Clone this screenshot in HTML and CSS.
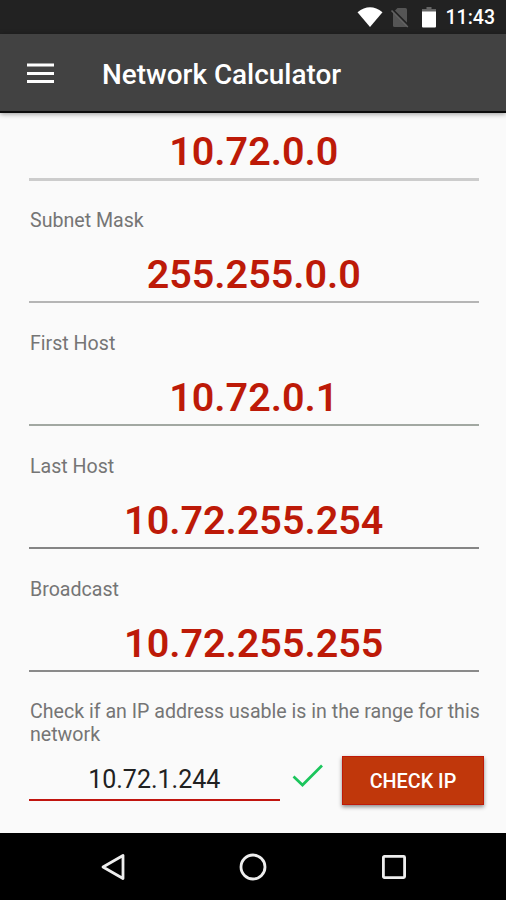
FILE: index.html
```html
<!DOCTYPE html>
<html lang="en">
<head>
<meta charset="utf-8">
<title>Network Calculator</title>
<link rel="stylesheet" href="styles.css">
</head>
<body>
<div class="status">
  <svg class="wifi" width="26" height="22" viewBox="0 0 26 22"><path d="M13 21 .5 6.2Q13-3.600 25.500 6.200Z" fill="#fff"/></svg>
  <svg class="sim" width="20" height="22" viewBox="0 0 20 22"><path d="M7.500 1H15.500Q17 1 17 2.500V18.500Q17 20 15.500 20H4.500Q3 20 3 18.500V5.500Z" fill="#555"/><path d="M2.500 2.500 18.500 18.500" stroke="#222" stroke-width="2"/><path d="M1.500 3.500 17.800 20" stroke="#626262" stroke-width="1.700"/></svg>
  <svg class="battery" width="14" height="21" viewBox="0 0 14 21"><path d="M4.500 0h5v2h-5z" fill="#666"/><path d="M0 2h14v3H0z" fill="#666"/><path d="M0 4.500h14V19.500Q14 20.500 13 20.500H1Q0 20.500 0 19.500Z" fill="#fff"/></svg>
  <span class="clock">11:43</span>
</div>
<header class="toolbar">
  <svg class="menu" width="27" height="21" viewBox="0 0 27 21"><path d="M0 2h27M0 10.500h27M0 18.500h27" stroke="#fff" stroke-width="3"/></svg>
  <h1 class="title">Network Calculator</h1>
</header>
<main class="content">
  <section class="field first"><div class="value">10.72.0.0</div></section>
  <section class="field mask"><div class="label">Subnet Mask</div><div class="value">255.255.0.0</div></section>
  <section class="field host"><div class="label">First Host</div><div class="value">10.72.0.1</div></section>
  <section class="field last"><div class="label">Last Host</div><div class="value">10.72.255.254</div></section>
  <section class="field"><div class="label">Broadcast</div><div class="value">10.72.255.255</div></section>
  <section class="check">
    <div class="label">Check if an IP address usable is in the range for this network</div>
    <div class="row">
      <div class="input">10.72.1.244</div>
      <svg class="tick" width="32" height="24" viewBox="0 0 32 24"><path d="M1.500 12.500 10.500 21 30 1.500" fill="none" stroke="#1bc55c" stroke-width="2.700"/></svg>
      <button class="button">CHECK IP</button>
    </div>
  </section>
</main>
<nav class="nav">
  <svg width="24" height="28" viewBox="0 0 24 28"><path d="M22 2.500V25.500L2 14Z" fill="none" stroke="#eee" stroke-width="2.800" stroke-linejoin="round"/></svg>
  <svg width="28" height="28" viewBox="0 0 28 28"><circle cx="14" cy="14" r="12" fill="none" stroke="#eee" stroke-width="2.800"/></svg>
  <svg width="26" height="26" viewBox="0 0 26 26"><rect x="2.400" y="2.400" width="21.200" height="21.200" rx="1" fill="none" stroke="#eee" stroke-width="2.800"/></svg>
</nav>
</body>
</html>
```
FILE: styles.css
```css
* { box-sizing: border-box; }
body {
  margin: 0;
  width: 506px;
  height: 900px;
  display: flex;
  flex-direction: column;
  overflow: hidden;
  background: #fafafa;
  font-family: Roboto, "Liberation Sans", sans-serif;
}
svg { display: block; flex: none; }
.status {
  height: 34px;
  flex: none;
  display: flex;
  align-items: flex-start;
  justify-content: flex-end;
  padding: 6px 11px 0 0;
  background: #222;
}
.sim { margin: 1px 0 0 7px; }
.battery { margin: 1px 0 0 12px; }
.clock {
  margin-left: 10px;
  font-size: 19.500px;
  font-weight: 500;
  line-height: 24px;
  color: #fff;
}
.toolbar {
  height: 79px;
  flex: none;
  display: flex;
  align-items: center;
  padding-left: 26.500px;
  background: #424242;
  border-bottom: 2px solid #0c0c0c;
  box-shadow: 0 1px 5px rgba(0, 0, 0, .4);
}
.menu { margin-top: 1px; }
.title {
  margin: 4px 0 0 48.500px;
  font-size: 27.900px;
  font-weight: 500;
  line-height: 32px;
  color: #fff;
}
.content { height: 720px; flex: none; padding: 0 27px 0 28.500px; }
.field {
  height: 122.800px;
  display: flex;
  flex-direction: column;
  justify-content: flex-end;
  border-bottom: 2px solid #8a8a8a;
}
.field.first { height: 68px; border-bottom: 3px solid #ccc; }
.field.mask { border-color: #b5b5b5; }
.field.host { border-color: #a2a8a2; }
.field.last { border-color: #858585; }
.field.mask, .field.host { position: relative; top: -0.500px; }
.label { padding-left: 1.500px; font-size: 19.600px; line-height: 23px; color: #757575; }
.value {
  margin: 20px 0 3px;
  font-size: 39.500px;
  font-weight: 600;
  line-height: 46px;
  text-align: center;
  color: #bd1a08;
}
.check { padding-top: 28px; margin-right: -8px; }
.row { display: flex; align-items: flex-start; padding-top: 10px; }
.input {
  width: 251.500px;
  height: 45px;
  padding-top: 9px;
  border-bottom: 2.500px solid #c1150f;
  font-size: 25px;
  line-height: 30px;
  text-align: center;
  color: #212121;
}
.tick { margin: 8px 0 0 12px; }
.button {
  width: 142px;
  height: 49px;
  margin-left: 18px;
  padding: 1px 0 0;
  border: 1px solid #bf1a08;
  background: #c0370b;
  box-shadow: 0 2px 4px rgba(0, 0, 0, .45);
  color: #fff;
  font-family: inherit;
  font-size: 19.800px;
  font-weight: 500;
}
.nav {
  height: 67px;
  flex: none;
  display: flex;
  align-items: center;
  justify-content: space-between;
  padding: 0 99px 0 101px;
  background: #000;
}
```
